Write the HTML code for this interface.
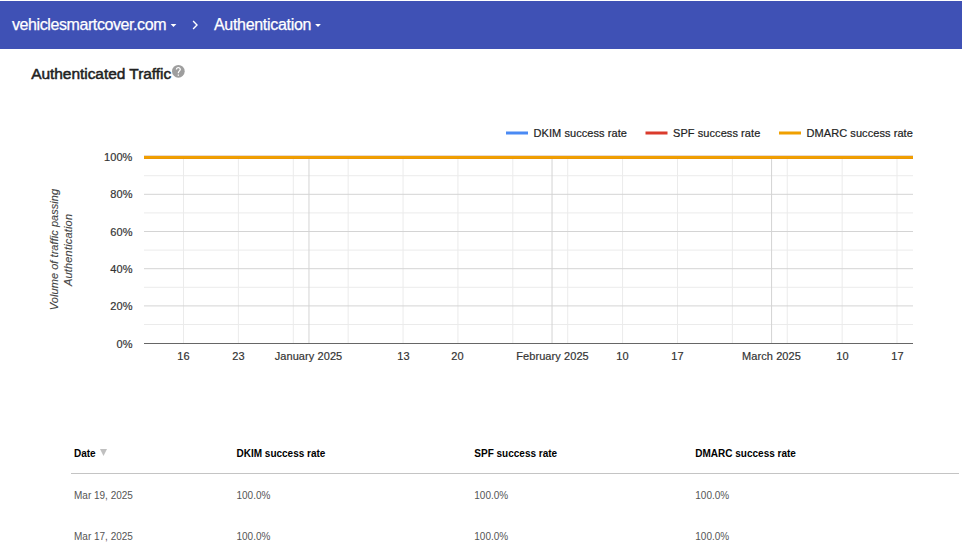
<!DOCTYPE html>
<html><head><meta charset="utf-8">
<style>
html,body{margin:0;padding:0;background:#fff;width:962px;height:558px;overflow:hidden;position:relative;font-family:"Liberation Sans",sans-serif;}
.hdr{position:absolute;left:0;top:1px;width:962px;height:48px;background:#3f51b5;}
.crumb{position:absolute;top:15px;color:#fff;-webkit-text-stroke:0.25px #fff;font-size:16px;line-height:20px;white-space:nowrap;}
.title{position:absolute;left:31.2px;top:65px;font-size:15.5px;color:#212121;-webkit-text-stroke:0.5px #212121;line-height:18px;white-space:nowrap;letter-spacing:-0.05px;}
svg{position:absolute;left:0;top:0;}
.lab{font-size:11px;fill:#333333;stroke:#333333;stroke-width:0.18px;letter-spacing:0.08px;font-family:"Liberation Sans",sans-serif;}
.ttl{font-size:11px;fill:#444;stroke:#444;stroke-width:0.12px;font-style:italic;font-family:"Liberation Sans",sans-serif;}
.leg{font-size:11px;fill:#222222;stroke:#222222;stroke-width:0.2px;letter-spacing:0.07px;font-family:"Liberation Sans",sans-serif;}
.th,.td{position:absolute;font-size:10px;line-height:12px;white-space:nowrap;}
.th{font-weight:bold;color:#000;top:448px;}
.td{color:#555;}
.rule{position:absolute;left:71px;top:473px;width:888px;height:1px;background:#c4c4c4;}
</style></head><body>
<div class="hdr"></div>
<div class="crumb" style="left:12px;letter-spacing:-0.41px">vehiclesmartcover.com</div>
<svg style="position:absolute;left:170px;top:23px" width="8" height="5"><path d="M0.6 1.1 L6.4 1.1 L3.5 4.0 Z" fill="#fff"/></svg>
<svg style="position:absolute;left:190px;top:19px" width="10" height="12"><path d="M3.1 2.0 L7.0 5.95 L3.1 9.9" stroke="#fff" stroke-width="1.4" fill="none"/></svg>
<div class="crumb" style="left:214px;letter-spacing:-0.31px">Authentication</div>
<svg style="position:absolute;left:315px;top:23px" width="8" height="5"><path d="M0.1 1.1 L5.9 1.1 L3.0 4.0 Z" fill="#fff"/></svg>
<div class="title">Authenticated Traffic</div>
<svg style="position:absolute;left:172.2px;top:65.1px" width="12.7" height="12.7" viewBox="2 2 20 20"><circle cx="12" cy="12" r="10" fill="#9e9e9e"/><path fill="#fff" d="M13 19h-2v-2h2v2zm2.07-7.75l-.9.92C13.45 12.9 13 13.5 13 15h-2v-.5c0-1.1.45-2.1 1.17-2.83l1.24-1.26c.37-.36.59-.86.59-1.41 0-1.1-.9-2-2-2s-2 .9-2 2H8c0-2.21 1.79-4 4-4s4 1.79 4 4c0 .88-.36 1.68-.93 2.25z"/></svg>
<svg width="962" height="400">
<rect x="183.00" y="157" width="1" height="186" fill="#ebebeb"/>
<rect x="237.89" y="157" width="1" height="186" fill="#ebebeb"/>
<rect x="292.78" y="157" width="1" height="186" fill="#ebebeb"/>
<rect x="347.66" y="157" width="1" height="186" fill="#ebebeb"/>
<rect x="402.55" y="157" width="1" height="186" fill="#ebebeb"/>
<rect x="457.43" y="157" width="1" height="186" fill="#ebebeb"/>
<rect x="512.32" y="157" width="1" height="186" fill="#ebebeb"/>
<rect x="567.20" y="157" width="1" height="186" fill="#ebebeb"/>
<rect x="622.09" y="157" width="1" height="186" fill="#ebebeb"/>
<rect x="676.98" y="157" width="1" height="186" fill="#ebebeb"/>
<rect x="731.86" y="157" width="1" height="186" fill="#ebebeb"/>
<rect x="786.75" y="157" width="1" height="186" fill="#ebebeb"/>
<rect x="841.63" y="157" width="1" height="186" fill="#ebebeb"/>
<rect x="896.52" y="157" width="1" height="186" fill="#ebebeb"/>
<rect x="144" y="175.20" width="769" height="1" fill="#ebebeb"/>
<rect x="144" y="193.80" width="769" height="1" fill="#d4d4d4"/>
<rect x="144" y="212.40" width="769" height="1" fill="#ebebeb"/>
<rect x="144" y="231.00" width="769" height="1" fill="#d4d4d4"/>
<rect x="144" y="249.60" width="769" height="1" fill="#ebebeb"/>
<rect x="144" y="268.20" width="769" height="1" fill="#d4d4d4"/>
<rect x="144" y="286.80" width="769" height="1" fill="#ebebeb"/>
<rect x="144" y="305.40" width="769" height="1" fill="#d4d4d4"/>
<rect x="144" y="324.00" width="769" height="1" fill="#ebebeb"/>
<rect x="308.46" y="157" width="1" height="186" fill="#d4d4d4"/>
<rect x="551.52" y="157" width="1" height="186" fill="#d4d4d4"/>
<rect x="771.07" y="157" width="1" height="186" fill="#d4d4d4"/>
<rect x="144" y="343" width="769" height="1" fill="#666666"/>
<rect x="144" y="155.9" width="769" height="3" fill="#4a8af4"/>
<rect x="144" y="155.9" width="769" height="3" fill="#da3b2c"/>
<rect x="144" y="155.9" width="769" height="3" fill="#f0a000"/>
<text x="132.5" y="161.0" text-anchor="end" class="lab">100%</text>
<text x="132.5" y="198.0" text-anchor="end" class="lab">80%</text>
<text x="132.5" y="236.0" text-anchor="end" class="lab">60%</text>
<text x="132.5" y="273.0" text-anchor="end" class="lab">40%</text>
<text x="132.5" y="310.0" text-anchor="end" class="lab">20%</text>
<text x="132.5" y="348.0" text-anchor="end" class="lab">0%</text>
<text x="183.5" y="360" text-anchor="middle" class="lab">16</text>
<text x="238.5" y="360" text-anchor="middle" class="lab">23</text>
<text x="308.5" y="360" text-anchor="middle" class="lab">January 2025</text>
<text x="403.5" y="360" text-anchor="middle" class="lab">13</text>
<text x="457.5" y="360" text-anchor="middle" class="lab">20</text>
<text x="552.5" y="360" text-anchor="middle" class="lab">February 2025</text>
<text x="622.5" y="360" text-anchor="middle" class="lab">10</text>
<text x="677.5" y="360" text-anchor="middle" class="lab">17</text>
<text x="771.5" y="360" text-anchor="middle" class="lab">March 2025</text>
<text x="842.5" y="360" text-anchor="middle" class="lab">10</text>
<text x="897.5" y="360" text-anchor="middle" class="lab">17</text>
<g transform="translate(57.5,249.5) rotate(-90)"><text x="0" y="0" text-anchor="middle" class="ttl" style="letter-spacing:0.05px">Volume of traffic passing</text></g>
<g transform="translate(71.8,249.9) rotate(-90)"><text x="0" y="0" text-anchor="middle" class="ttl" style="letter-spacing:0.18px">Authentication</text></g>
<rect x="506" y="131.5" width="22" height="3" fill="#4a8af4"/>
<text x="533.5" y="137" class="leg">DKIM success rate</text>
<rect x="645.5" y="131.5" width="22" height="3" fill="#da3b2c"/>
<text x="673.0" y="137" class="leg">SPF success rate</text>
<rect x="779" y="131.5" width="22" height="3" fill="#f0a000"/>
<text x="806.5" y="137" class="leg">DMARC success rate</text>
</svg>
<div class="th" style="left:74px">Date</div>
<svg style="position:absolute;left:99px;top:448px" width="9" height="9"><path d="M1 1 L8 1 L4.5 8 Z" fill="#c0c0c0"/></svg>
<div class="th" style="left:236.5px">DKIM success rate</div>
<div class="th" style="left:474.3px">SPF success rate</div>
<div class="th" style="left:695.3px">DMARC success rate</div>
<div class="rule"></div>
<div class="td" style="left:74px;top:490px">Mar 19, 2025</div>
<div class="td" style="left:236.5px;top:490px">100.0%</div>
<div class="td" style="left:474.3px;top:490px">100.0%</div>
<div class="td" style="left:695.3px;top:490px">100.0%</div>
<div class="td" style="left:74px;top:531px">Mar 17, 2025</div>
<div class="td" style="left:236.5px;top:531px">100.0%</div>
<div class="td" style="left:474.3px;top:531px">100.0%</div>
<div class="td" style="left:695.3px;top:531px">100.0%</div>
</body></html>
